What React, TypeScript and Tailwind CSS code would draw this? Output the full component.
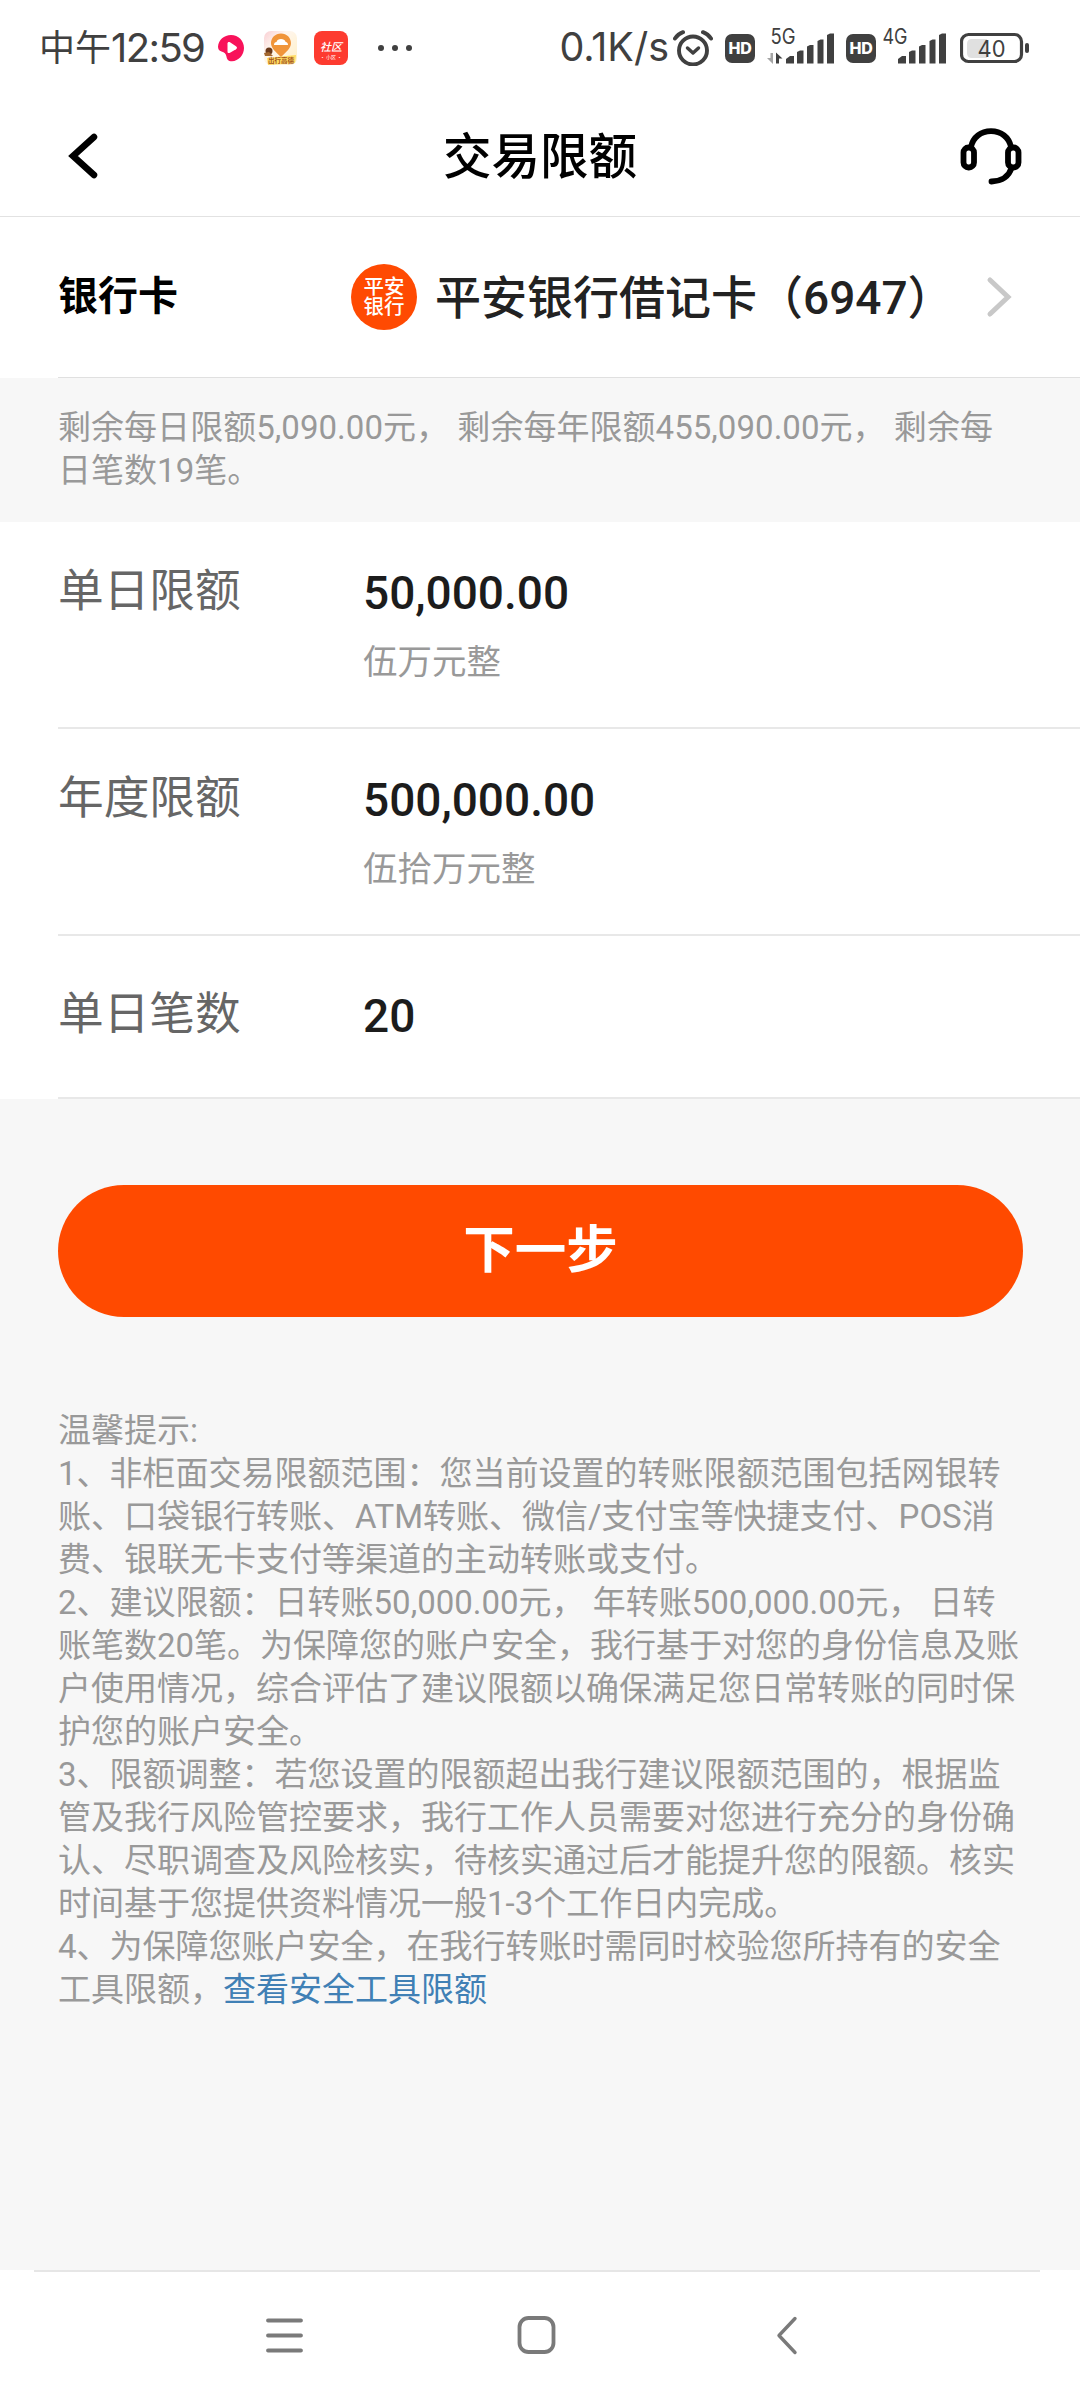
import type { ReactNode } from 'react'
import clsx from 'clsx'

const limits = [
  { label: '单日限额', value: '50,000.00', words: '伍万元整' },
  { label: '年度限额', value: '500,000.00', words: '伍拾万元整' },
  { label: '单日笔数', value: '20', words: '' },
]

const tips = [
  '温馨提示:',
  '1、非柜面交易限额范围：您当前设置的转账限额范围包括网银转',
  '账、口袋银行转账、ATM转账、微信/支付宝等快捷支付、POS消',
  '费、银联无卡支付等渠道的主动转账或支付。',
  '2、建议限额：日转账50,000.00元， 年转账500,000.00元， 日转',
  '账笔数20笔。为保障您的账户安全，我行基于对您的身份信息及账',
  '户使用情况，综合评估了建议限额以确保满足您日常转账的同时保',
  '护您的账户安全。',
  '3、限额调整：若您设置的限额超出我行建议限额范围的，根据监',
  '管及我行风险管控要求，我行工作人员需要对您进行充分的身份确',
  '认、尽职调查及风险核实，待核实通过后才能提升您的限额。核实',
  '时间基于您提供资料情况一般1-3个工作日内完成。',
  '4、为保障您账户安全，在我行转账时需同时校验您所持有的安全',
]

function HdBadge({ className }: { className?: string }) {
  return (
    <div
      className={clsx(
        'w-[30px] h-[29px] rounded-[7px] bg-[#404040] text-white text-[16px] leading-[29px] tracking-[-0.300px] text-center font-extrabold font-[Inter]',
        className
      )}
    >
      HD
    </div>
  )
}

function Signal({ label, arrows }: { label: string; arrows?: boolean }) {
  return (
    <svg width="68" height="56" viewBox="0 -8 68 56" className="shrink-0" fill="#404040">
      <text x="3.5" y="16" fontSize="21" fontFamily="Inter, sans-serif" textLength="25" lengthAdjust="spacingAndGlyphs">
        {label}
      </text>
      {arrows && (
        <>
          <path d="M6 25v11L0 30h3.500v-5z" fill="#a5a5a5" />
          <path d="M9 35.500V24.500l6.500 6H12v5z" />
        </>
      )}
      <path d="M19 35.500V31l4-3h4v7.500z" />
      <path d="M30 35.500V24l3-1.500h3.500v13z" />
      <path d="M40 35.500V18.500l3-1.500h3.500v18.500z" />
      <path d="M50.500 35.500V13l3-1.500h3v24z" />
      <path d="M60 35.500V7l3-1.500h4v30z" />
    </svg>
  )
}

function StatusBar() {
  return (
    <div className="h-24 flex items-center text-[#404040]">
      <div className="ml-[39px] w-[172px] flex items-center whitespace-nowrap font-[Inter,'Noto_Sans_CJK_SC',sans-serif]">
        <span className="text-[36px] leading-none w-[72px]">中午</span>
        <span className="text-[40px] leading-none tracking-[-1.600px]">12:59</span>
      </div>
      <svg width="28" height="28" viewBox="0 0 28 28" className="ml-[6px] shrink-0">
        <path
          d="M14 1c7.500 0 13 5.800 13 13 0 7-5.500 13.200-12 13.200-4 0-5-2-5.500-4.500C9 19.500 7.500 18.300 4.500 17.500 2 16.800 1 15 1 12.500 1.500 6 7 1 14 1z"
          fill="#f8125a"
        />
        <path d="M10.500 9.500c0-1.500 1.200-2 2.500-1.300l6 4c1.300.9 1.300 2.200 0 3l-6 3.500c-1.500.8-2.500.2-2.500-1.300z" fill="#fff" />
      </svg>
      <svg width="34" height="34" viewBox="0 0 34 34" className="ml-[19px] shrink-0">
        <defs>
          <linearGradient id="mapBg" x1="0" y1="0" x2="1" y2="1">
            <stop offset="0" stopColor="#f9cfd4" />
            <stop offset="0.35" stopColor="#fff6ee" />
            <stop offset="1" stopColor="#fff0c4" />
          </linearGradient>
        </defs>
        <rect width="33" height="34" rx="7" fill="url(#mapBg)" />
        <path d="M17 2.500c5.800 0 10 4.300 10 9.700 0 5-5 8.800-10 14-5-5.200-10-9-10-14 0-5.400 4.200-9.700 10-9.700z" fill="#f0953a" />
        <path d="M10 14c0-2 1-2.700 2.500-3 .8-2.200 2-3 4.500-3s3.700.8 4.700 3c1.500.3 2.300 1.200 2.300 3z" fill="#fff" />
        <circle cx="5" cy="20" r="3.500" fill="#6b3a1c" />
        <path d="M0 22l5-1 4 4H1z" fill="#a3672f" />
        <path d="M3 27l29-3-1 8-27 2z" fill="#ffdc62" />
        <text x="4" y="32" fontSize="6.500" fontWeight="700" fill="#a3521c" fontFamily="Noto Sans CJK SC, sans-serif">
          出行高德
        </text>
      </svg>
      <div className="ml-[16px] w-[34px] h-[34px] rounded-[8px] bg-[#fd3b2f] text-white flex flex-col items-center font-['Noto_Sans_CJK_SC',sans-serif]">
        <span className="mt-[8px] text-[11px] leading-[14px] font-medium italic whitespace-nowrap">社区</span>
        <span className="text-[5px] leading-[7px]">· 小区 ·</span>
      </div>
      <div className="ml-[30px] flex gap-[8px]">
        <i className="size-[6px] rounded-full bg-[#404040]" />
        <i className="size-[6px] rounded-full bg-[#404040]" />
        <i className="size-[6px] rounded-full bg-[#404040]" />
      </div>

      <div className="ml-auto mr-[49px] flex items-center">
        <span className="text-[39.500px] leading-none font-[Inter]">0.1K/s</span>
        <svg width="40" height="36" viewBox="0 0 40 36" fill="none" stroke="#404040" className="ml-[4px]">
          <circle cx="20" cy="20.500" r="14" strokeWidth="3.900" />
          <path d="M14.500 18l5.500 5 5.500-5" strokeWidth="3.500" strokeLinecap="round" strokeLinejoin="round" />
          <path d="M2 8.500Q5 4 10 2.200M38 8.500Q35 4 30 2.200" strokeWidth="4" strokeLinecap="round" />
        </svg>
        <HdBadge className="ml-[12px]" />
        <div className="ml-[12px]">
          <Signal label="5G" arrows />
        </div>
        <HdBadge className="ml-[11px]" />
        <div className="ml-[3px]">
          <Signal label="4G" />
        </div>
        <svg width="71" height="32" viewBox="0 0 71 32" className="ml-[13px]">
          <rect x="1.500" y="2.500" width="60" height="27" rx="7" fill="none" stroke="#404040" strokeWidth="3.200" />
          <path d="M12 7h15v19H12q-5 0-5-5v-9q0-5 5-5z" fill="#e0e0e0" />
          <text x="31.500" y="24.500" fontSize="23" fontFamily="Inter, sans-serif" textAnchor="middle" textLength="28" lengthAdjust="spacingAndGlyphs" fill="#404040">
            40
          </text>
          <rect x="65" y="11" width="4" height="10" rx="2" fill="#404040" />
        </svg>
      </div>
    </div>
  )
}

function Header() {
  return (
    <header className="h-[121px] border-b border-[#e2e2e2] flex items-start text-black">
      <svg width="32" height="48" viewBox="0 0 32 48" fill="none" stroke="#000" strokeWidth="6.500" className="ml-[67px] mt-[36px]">
        <path d="M27 5L6 24l21 19" strokeLinecap="round" />
      </svg>
      <h1 className="mt-[30px] ml-[344px] w-[194px] text-[48.500px] leading-[64px] font-medium whitespace-nowrap">
        交易限额
      </h1>
      <svg width="62" height="58" viewBox="0 0 62 58" fill="none" stroke="#000" strokeWidth="5.800" className="ml-[323px] mt-[31px]">
        <rect x="3.500" y="20.500" width="10.500" height="20" rx="5" />
        <rect x="48" y="20.500" width="10.500" height="20" rx="5" />
        <path d="M11 20C13 10 21 4.200 31 4.200S49 10 51 20" />
        <path d="M51.500 41c-2.500 8-9.500 13-20 13.500" strokeLinecap="round" />
      </svg>
    </header>
  )
}

function Divider() {
  return <div className="ml-[58px] h-[2px] bg-[#e8e8e8]" />
}

function CardRow() {
  return (
    <>
      <div className="h-[160px] flex items-center">
        <span className="ml-[58px] w-[293px] text-[40px] font-bold text-black">银行卡</span>
        <div className="size-[66px] rounded-full bg-[#ff4a02] flex flex-col items-center justify-center text-white text-[20.500px] leading-[20px] font-medium">
          <span>平安</span>
          <span>银行</span>
        </div>
        <span className="ml-[18px] pt-[2px] text-[46px] font-medium text-[#222] whitespace-nowrap">
          平安银行借记卡（6947）
        </span>
        <svg width="28" height="42" viewBox="0 0 28 42" fill="none" stroke="#c8c8c8" strokeWidth="5" className="ml-auto mr-[66px]">
          <path d="M4 4l18 17L4 38" strokeLinecap="round" />
        </svg>
      </div>
      <div className="ml-[58px] h-px bg-[#e0e0e0]" />
    </>
  )
}

function Line({ children }: { children: ReactNode }) {
  return <p className="whitespace-pre">{children}</p>
}

export default function App() {
  return (
    <div className="w-[1080px] h-[2400px] bg-white flex flex-col overflow-hidden font-[Roboto,'Noto_Sans_CJK_SC',sans-serif]">
      <StatusBar />
      <Header />
      <CardRow />

      <div className="h-[144px] bg-[#f7f7f7] pl-[58px] pt-[28px] text-[33px] leading-[43px] tracking-[0.040px] text-[#999]">
        <Line>剩余每日限额5,090.00元， 剩余每年限额455,090.00元， 剩余每</Line>
        <Line>日笔数19笔。</Line>
      </div>

      {limits.map(({ label, value, words }) => (
        <div key={label}>
          <div className={clsx('flex pl-[58px]', words ? 'h-[205px] pt-[38px]' : 'h-[161px] pt-[47px]')}>
            <span className="w-[305px] text-[45.700px] leading-[64px] text-[#666]">{label}</span>
            <div className="pt-px">
              <div className="text-[46px] leading-[64px] font-medium text-[#1c1c1c]">{value}</div>
              {words && <div className="mt-[13px] text-[34.500px] leading-[48px] text-[#999]">{words}</div>}
            </div>
          </div>
          <Divider />
        </div>
      ))}

      <main className="flex-1 bg-[#f7f7f7] px-[58px] pt-[86px]">
        <button className="w-[965px] h-[132px] rounded-full bg-[#ff4a00] text-white text-[51.500px] font-bold flex items-center justify-center">
          下一步
        </button>
        <div className="mt-[92px] text-[33px] leading-[43px] text-[#999]">
          {tips.map((t) => (
            <Line key={t}>{t}</Line>
          ))}
          <Line>
            工具限额，<a className="text-[#4080b5]">查看安全工具限额</a>
          </Line>
        </div>
      </main>

      <nav className="h-[130px]">
        <div className="ml-[34px] mr-[40px] h-[2px] mb-[43px] bg-[#e6e6e6]" />
        <div className="flex items-center">
          <svg width="40" height="40" viewBox="0 0 40 40" stroke="#7a7a7a" strokeWidth="3.800" strokeLinecap="round" className="ml-[264px]">
            <path d="M4 5.500h33M4 20.500h33M4 35.500h33" />
          </svg>
          <svg width="40" height="40" viewBox="0 0 40 40" fill="none" stroke="#7a7a7a" strokeWidth="3.800" className="ml-[212px]">
            <rect x="3.500" y="3" width="34" height="34" rx="9" />
          </svg>
          <svg width="24" height="40" viewBox="0 0 24 40" fill="none" stroke="#7a7a7a" strokeWidth="3.400" strokeLinecap="round" strokeLinejoin="round" className="ml-[219px]">
            <path d="M20 3.500L4 20.500l16 17" />
          </svg>
        </div>
      </nav>
    </div>
  )
}
